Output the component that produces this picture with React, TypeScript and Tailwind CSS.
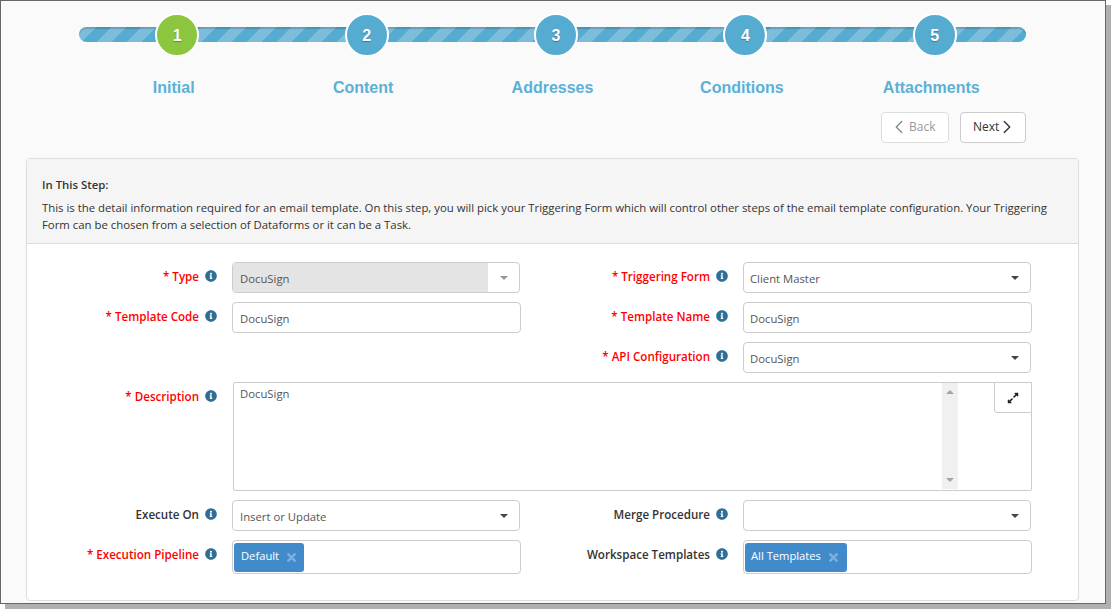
import React from "react";
import { FaInfoCircle, FaExpandAlt, FaTimes } from "react-icons/fa";
import { ChevronLeft, ChevronRight } from "lucide-react";

const steps = ["Initial", "Content", "Addresses", "Conditions", "Attachments"];

function Label({ text, required }: { text: string; required?: boolean }) {
  return (
    <div className="flex h-[30px] items-start justify-end pt-[5px] pr-[15px]">
      <span className={`text-[11.6px] leading-[20px] font-semibold ${required ? "text-[#ff0000]" : "text-[#333333]"}`}>
        {required ? "* " : ""}
        {text}
      </span>
      <FaInfoCircle className="mt-[3px] ml-[6px] text-[12px] text-[#2f6f96]" />
    </div>
  );
}

function Caret({ muted }: { muted?: boolean }) {
  return (
    <div className={`h-0 w-0 border-x-[4px] border-t-[4px] border-x-transparent ${muted ? "border-t-[#999999]" : "border-t-[#444444]"}`} />
  );
}

function Select({ value, disabled, right }: { value?: string; disabled?: boolean; right?: boolean }) {
  return (
    <div className="flex h-[31px] w-[288px] overflow-hidden rounded-[4px] border border-[#cccccc] bg-white">
      <div className={`flex-1 text-[11.3px] leading-[32px] text-[#555555] ${right ? "pl-[6px]" : "pl-[7px]"} ${disabled ? "bg-[#e4e4e4]" : ""}`}>
        {value}
      </div>
      <div className="flex w-[31px] items-center justify-center">
        <Caret muted={disabled} />
      </div>
    </div>
  );
}

function Input({ value, right }: { value: string; right?: boolean }) {
  return (
    <div className={`h-[31px] w-[289px] rounded-[4px] border border-[#cccccc] bg-white text-[11.3px] leading-[32px] text-[#555555] ${right ? "pl-[6px]" : "pl-[7px]"}`}>
      {value}
    </div>
  );
}

function Tags({ value, right }: { value: string; right?: boolean }) {
  return (
    <div className="flex h-[34px] w-[289px] items-start rounded-[4px] border border-[#cccccc] bg-white pt-[2px] pl-[1px]">
      <div className={`flex h-[29px] items-center gap-[6px] rounded-[3px] bg-[#428bca] pb-[2px] text-[11.2px] text-white ${right ? "pr-[7px] pl-[6px]" : "pr-[6px] pl-[7px]"}`}>
        {value}
        <FaTimes className="mt-[2px] text-[13px] text-[#7fb0dc]" />
      </div>
    </div>
  );
}

export default function App() {
  return (
    <div className="h-[609px] w-[1111px] overflow-hidden bg-white font-['Open_Sans',sans-serif]">
      <div className="h-[604px] w-[1106px] border border-[#666666] bg-[#fafafa] shadow-[5px_5px_0_#b0b0b0]">
        <div className="pt-[26px] pl-[78px]">
          <div className="relative w-[947px]">
            <div className="absolute top-0 left-0 h-[15px] w-full rounded-full bg-[repeating-linear-gradient(-45deg,#56acd0_0,#56acd0_10.6px,#7bbddb_10.6px,#7bbddb_21.2px)] shadow-[inset_0_2px_1px_rgba(0,0,0,0.15)]" />
            <div className="relative grid grid-cols-5">
              {steps.map((s, i) => (
                <div key={s} className="flex flex-col items-center">
                  <div
                    className={`-mt-[14px] ml-[7px] flex h-[44px] w-[44px] items-center justify-center rounded-full border-2 border-white pt-[1px] font-['Liberation_Sans',sans-serif] text-[16px] font-bold text-white [text-shadow:0_1px_1px_rgba(0,0,0,0.3)] ${
                      i === 0 ? "bg-[#8cc63f]" : "bg-[#56acd0]"
                    }`}
                  >
                    {i + 1}
                  </div>
                  <div className="mt-[21px] font-['Liberation_Sans',sans-serif] text-[16px] leading-[20px] font-bold text-[#5bb0d6]">
                    {s}
                  </div>
                </div>
              ))}
            </div>
          </div>
        </div>

        <div className="mt-[14px] flex justify-end gap-[11px] pr-[79px]">
          <div className="flex h-[31px] w-[68px] items-center rounded-[4px] border border-[#dddddd] bg-white pb-[2px] pl-[6px] text-[12px] text-[#999999]">
            <ChevronLeft size={22} strokeWidth={1.5} className="-mr-px text-[#888888]" />
            Back
          </div>
          <div className="flex h-[31px] w-[66px] items-center rounded-[4px] border border-[#cccccc] bg-white pb-[2px] pl-[12px] text-[12px] text-[#333333]">
            Next
            <ChevronRight size={22} strokeWidth={1.5} className="-ml-[3px]" />
          </div>
        </div>

        <div className="mt-[15px] ml-[25px] h-[443px] w-[1053px] rounded-[4px] border border-[#dddddd] bg-white">
          <div className="h-[85px] rounded-t-[4px] border-b border-[#dddddd] bg-[#f5f5f5] px-[15px] pt-[17px] text-[11.36px] leading-[17px] text-[#333333]">
            <div className="font-semibold">In This Step:</div>
            <div className="mt-[6px]">
              This is the detail information required for an email template. On this step, you will pick your Triggering Form which will control other steps of the email template configuration. Your Triggering Form can be chosen from a selection of Dataforms or it can be a Task.
            </div>
          </div>

          <div className="grid grid-cols-[205px_289px_222px_289px] gap-y-[9px] pt-[18px]">
            <Label text="Type" required />
            <Select value="DocuSign" disabled />
            <Label text="Triggering Form" required />
            <Select value="Client Master" right />

            <Label text="Template Code" required />
            <Input value="DocuSign" />
            <Label text="Template Name" required />
            <Input value="DocuSign" right />

            <div className="col-start-3">
              <Label text="API Configuration" required />
            </div>
            <Select value="DocuSign" right />

            <Label text="Description" required />
            <div className="relative col-span-3 ml-px h-[109px] rounded-[2px] border border-[#cccccc] bg-white">
              <div className="pt-[2px] pl-[6px] text-[11.3px] leading-[17px] text-[#555555]">DocuSign</div>
              <div className="absolute top-0 right-[73px] flex h-[106px] w-[16px] flex-col items-center justify-between bg-[#f0f0f0] py-[7px]">
                <div className="h-0 w-0 border-x-[4px] border-b-[4px] border-x-transparent border-b-[#a6a6a6]" />
                <div className="h-0 w-0 border-x-[4px] border-t-[4px] border-x-transparent border-t-[#a6a6a6]" />
              </div>
              <div className="absolute -top-px -right-px flex h-[31px] w-[38px] items-center justify-center rounded-bl-[3px] border border-[#cccccc] bg-white">
                <FaExpandAlt className="text-[12px] text-[#222222]" />
              </div>
            </div>

            <Label text="Execute On" />
            <Select value="Insert or Update" />
            <Label text="Merge Procedure" />
            <Select right />

            <Label text="Execution Pipeline" required />
            <Tags value="Default" />
            <Label text="Workspace Templates" />
            <Tags value="All Templates" right />
          </div>
        </div>
      </div>
    </div>
  );
}
